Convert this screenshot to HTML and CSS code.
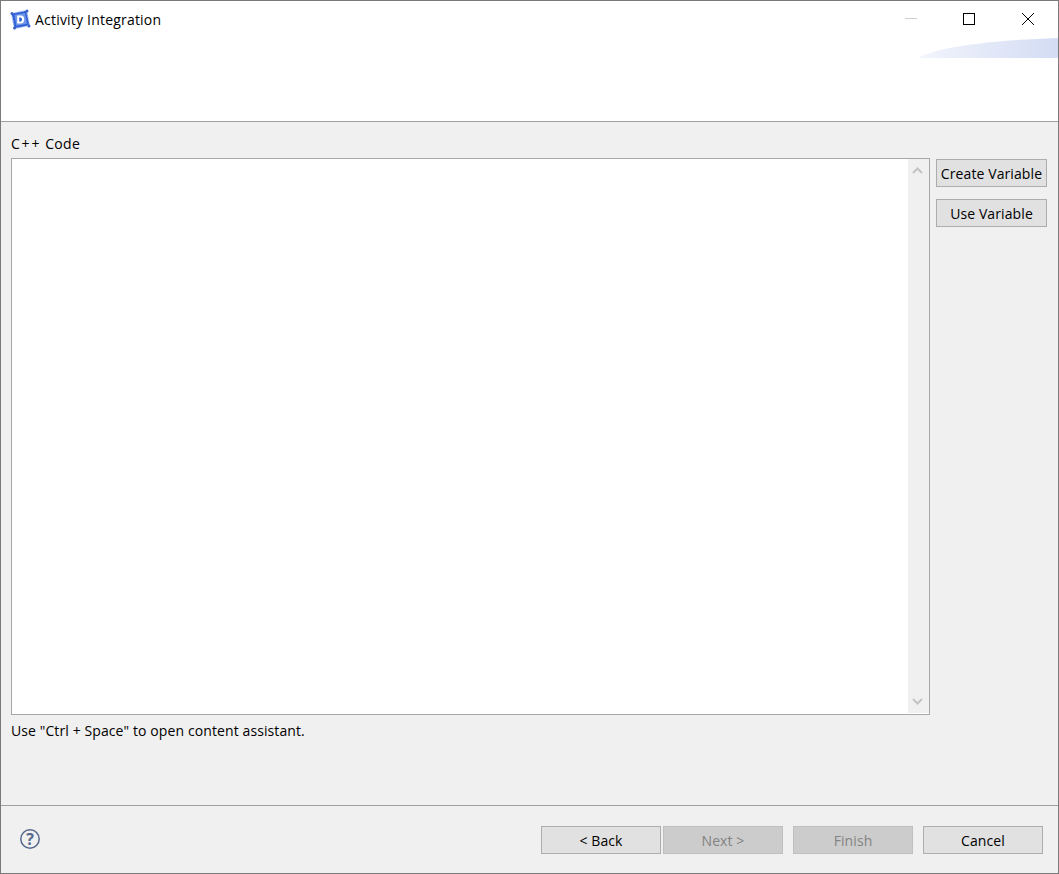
FILE: index.html
```html
<!DOCTYPE html>
<html lang="en">
<head>
<meta charset="utf-8">
<title>Activity Integration</title>
<link rel="stylesheet" href="styles.css">
</head>
<body>
<div class="window">
  <header class="header">
    <div class="titlebar">
      <svg class="app-icon" width="21" height="21" viewBox="0 0 21 21">
        <path d="M1.5 4.5 L16.5 1.5 L19.5 16.5 L4.5 19.5 Z" fill="#2f5fd6"/>
        <path d="M1.5 4.5 L16.5 1.5 L19.5 16.5 L4.5 19.5 Z" fill="none" stroke="#9db6ee" stroke-width="1.2" stroke-dasharray="2 1.5"/>
        <path d="M4.5 6 L15 4 L17 14.8 L6.3 16.8 Z" fill="#6f94e8"/>
        <circle cx="2" cy="4.5" r="1.5" fill="#3a62c8"/><circle cx="17" cy="2" r="1.5" fill="#3a62c8"/>
        <circle cx="19" cy="17" r="1.5" fill="#3a62c8"/><circle cx="4.5" cy="19" r="1.5" fill="#3a62c8"/>
        <path d="M7.2 6.5 H10.8 Q14.2 6.5 14.2 10.5 Q14.2 14.5 10.8 14.5 H7.2 Z" fill="#fff"/>
        <path d="M9.2 8.5 H10.6 Q12 8.5 12 10.5 Q12 12.5 10.6 12.5 H9.2 Z" fill="#2f5fd6"/>
      </svg>
      <span class="title">Activity Integration</span>
      <div class="controls">
        <svg class="ctl" width="14" height="14" viewBox="0 0 14 14"><path d="M2 6.5 H14" stroke="#cfcfcf" fill="none"/></svg>
        <svg class="ctl" width="14" height="14" viewBox="0 0 14 14"><rect x="1.5" y="1.5" width="11" height="11" stroke="#000" fill="none"/></svg>
        <svg class="ctl" width="14" height="14" viewBox="0 0 14 14"><path d="M1 1 L13 13 M13 1 L1 13" stroke="#000" fill="none"/></svg>
      </div>
    </div>
    <svg class="swoosh" width="140" height="20" viewBox="0 0 140 20">
      <defs><linearGradient id="sw" x1="0" x2="1" y1="0" y2="0"><stop offset="0" stop-color="#f3f5fc"/><stop offset="1" stop-color="#d3dcf4"/></linearGradient></defs>
      <path d="M0 20 C20 8 80 2 140 0 V20 Z" fill="url(#sw)"/>
    </svg>
  </header>

  <main class="content">
    <div class="label"><span class="cpp">C++</span> Code</div>
    <div class="editor-row">
      <div class="editor">
        <div class="code"></div>
        <div class="scrollbar">
          <svg width="11" height="7" viewBox="0 0 11 7"><path d="M1 6 L5.5 1.5 L10 6" stroke="#c4c4c4" stroke-width="2" fill="none"/></svg>
          <svg width="11" height="7" viewBox="0 0 11 7"><path d="M1 1 L5.5 5.5 L10 1" stroke="#c4c4c4" stroke-width="2" fill="none"/></svg>
        </div>
      </div>
      <div class="side">
        <button class="btn side-btn">Create Variable</button>
        <button class="btn side-btn">Use Variable</button>
      </div>
    </div>
    <div class="hint">Use "Ctrl + Space" to open content assistant.</div>
  </main>

  <footer class="footer">
    <svg class="help" width="22" height="22" viewBox="0 0 22 22">
      <circle cx="11" cy="11" r="9.2" fill="none" stroke="#56688c" stroke-width="1.5"/>
      <text x="11" y="16.5" text-anchor="middle" class="help-mark">?</text>
    </svg>
    <div class="actions">
      <div class="nav-pair">
        <button class="btn foot-btn">&lt; Back</button>
        <button class="btn foot-btn" disabled>Next &gt;</button>
      </div>
      <button class="btn foot-btn" disabled>Finish</button>
      <button class="btn foot-btn">Cancel</button>
    </div>
  </footer>
</div>
</body>
</html>
```
FILE: styles.css
```css
* { box-sizing: border-box; }
html, body { margin: 0; padding: 0; }
body {
  font-family: "Open Sans", "Noto Sans", "Liberation Sans", sans-serif;
  font-size: 14px;
  color: #000;
}
.window {
  width: 1059px;
  height: 874px;
  border: 1px solid #7a7a7a;
  background: #f0f0f0;
  display: flex;
  flex-direction: column;
}
.header {
  height: 120px;
  background: #fff;
  position: relative;
  flex: none;
}
.titlebar {
  display: flex;
  align-items: center;
  height: 36px;
  padding-left: 9px;
}
.app-icon { flex: none; }
.title { margin-left: 4px; font-size: 14px; letter-spacing: 0.2px; }
.controls {
  margin-left: auto;
  display: flex;
  gap: 45px;
  padding-right: 23px;
}
.swoosh { position: absolute; right: 0; top: 37px; }
.content {
  flex: 1;
  border-top: 1px solid #a0a0a0;
  padding: 12px 11px 0 10px;
  min-height: 0;
}
.label { height: 24px; line-height: 19px; font-size: 14px; letter-spacing: 0.3px; }
.cpp { letter-spacing: 1.8px; }
.editor-row { display: flex; gap: 6px; }
.editor {
  width: 919px;
  height: 557px;
  border: 1px solid #a8a8a8;
  background: #fff;
  display: flex;
}
.code { flex: 1; }
.scrollbar {
  width: 21px;
  margin-bottom: 1px;
  background: #f0f0f0;
  display: flex;
  flex-direction: column;
  justify-content: space-between;
  align-items: center;
  padding: 8px 2px 8px 0;
}
.side {
  display: flex;
  flex-direction: column;
  gap: 12px;
  padding-top: 1px;
}
.btn {
  font-family: inherit;
  font-size: 14px;
  letter-spacing: 0.1px;
  color: #000;
  background: #e1e1e1;
  border: 1px solid #adadad;
  height: 28px;
  padding: 0;
  white-space: nowrap;
}
.btn:disabled { background: #cccccc; border-color: #bfbfbf; color: #838383; }
.side-btn { width: 111px; }
.hint { margin-top: 6px; line-height: 20px; font-size: 14px; letter-spacing: 0.1px; }
.footer {
  flex: none;
  height: 68px;
  border-top: 1px solid #a0a0a0;
  display: flex;
  align-items: center;
  padding: 0 15px 0 18px;
  justify-content: space-between;
}
.help { flex: none; margin-bottom: 2px; }
.help-mark { font-size: 16px; font-weight: 700; fill: #56688c; }
.actions { display: flex; gap: 10px; }
.nav-pair { display: flex; gap: 2px; }
.foot-btn { width: 120px; padding-top: 1px; }
```
